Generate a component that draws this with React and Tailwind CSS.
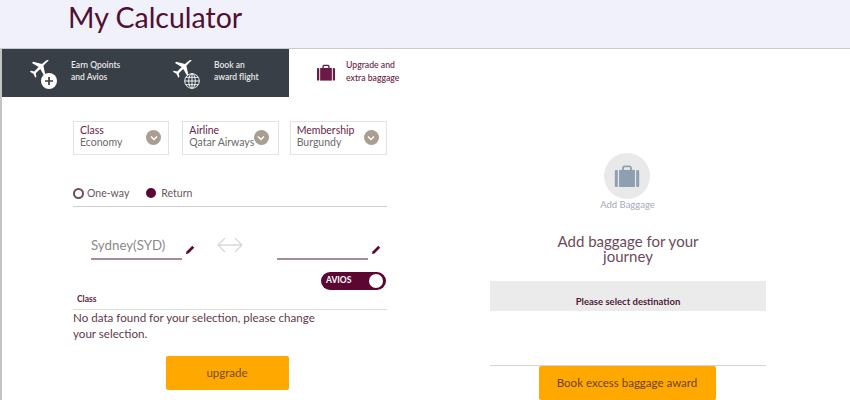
import React from 'react';

const PlaneIcon = ({ className }) => (
    <svg viewBox="0 0 24 24" className={className} fill="currentColor">
        <path d="M23.500 1.800c-.7-.9-2.300-.5-3.300.3l-4.700 3.900L5 3.400 3.600 4.700l8 5-5.300 5.200-4-.9L1 15.200l4.300 2.600 2.400 4.600 1.200-1.200-.8-4.100 5.400-5.100 4.700 8.200 1.400-1.400-2.300-10.600 4.300-4.500c.9-1 2.400-1.900 1.900-2.500z" />
    </svg>
);

const PlusBadge = () => (
    <svg viewBox="0 0 16 16" className="w-4 h-4">
        <circle cx="8" cy="8" r="8" fill="#fff" />
        <path d="M8 4v8M4 8h8" stroke="#383f47" strokeWidth="1.700" />
    </svg>
);

const GlobeBadge = () => (
    <svg viewBox="0 0 16 16" className="w-4 h-4" fill="none" stroke="#fff" strokeWidth="0.900">
        <circle cx="8" cy="8" r="7.300" />
        <ellipse cx="8" cy="8" rx="3.300" ry="7.300" />
        <path d="M8 .7v14.600M.7 8h14.600M1.800 4.300h12.400M1.800 11.700h12.400" />
    </svg>
);

const BagIcon = ({ className }) => (
    <svg viewBox="0 0 20 18" className={className} fill="currentColor">
        <path d="M6 4V2.500C6 1.200 7 .5 8 .5h4c1 0 2 .7 2 2V4h-1.500V2.500c0-.4-.2-.6-.6-.6H8.100c-.4 0-.6.2-.6.6V4z" />
        <rect x="0" y="4" width="2.500" height="14" rx="1" />
        <rect x="3.500" y="4" width="13" height="14" />
        <rect x="17.500" y="4" width="2.500" height="14" rx="1" />
    </svg>
);

const Pencil = ({ className }) => (
    <svg viewBox="0 0 10 10" className={className} fill="#5c0632">
        <path d="M0 10l.6-2.700L7 .9l2.100 2.100-6.400 6.400z" />
    </svg>
);

const Chevron = ({ className }) => (
    <span className={`flex items-center justify-center w-[15px] h-[15px] rounded-full bg-[#a89e92] ${className}`}>
        <svg viewBox="0 0 10 10" className="w-[10px] h-[10px]" fill="none" stroke="#fff" strokeWidth="1.500">
            <path d="M2 3.500l3 3 3-3" />
        </svg>
    </span>
);

const Tab = ({ badge, line1, line2, width }) => (
    <div className={`flex items-center ${width}`}>
        <div className="relative w-[28px] h-[30px] ml-[27px] mt-[2px] text-white">
            <PlaneIcon className="w-[20px] h-[20px] absolute left-0 top-0" />
            <span className="absolute right-0 bottom-0">{badge}</span>
        </div>
        <div className="ml-[14px] mb-[4px] text-[8.500px] leading-[12.500px] text-[#e8e8e8] font-semibold">
            <div>{line1}</div>
            <div>{line2}</div>
        </div>
    </div>
);

const SelectBox = ({ label, value, width, chevron }) => (
    <div className={`relative h-[34px] border-[1.500px] border-[#e3e3e3] pl-[6px] pt-[2px] text-[10.500px] leading-[12px] ${width}`}>
        <div className="text-[#6a2346]">{label}</div>
        <div className="text-[#6b6b6b] whitespace-nowrap">{value}</div>
        <Chevron className={`absolute top-[8px] ${chevron}`} />
    </div>
);

const App = () => {
    return (
        <div className="w-[850px] h-[400px] overflow-hidden bg-white font-['Lato','Open_Sans',sans-serif]">
            <header className="h-[49px] bg-[#f1f1fb] border-b border-[#c9c9cf] pl-[68px]">
                <h1 className="text-[28.500px] leading-[34px] text-[#4f1033]">My Calculator</h1>
            </header>

            <div className="flex h-[351px] border-l-2 border-[#c4c4c4]">
                <div className="w-[488px] shrink-0">
                    <nav className="flex h-[48px]">
                        <div className="flex w-[287px] bg-[#383f47]">
                            <Tab badge={<PlusBadge />} line1="Earn Qpoints" line2="and Avios" width="w-[143px]" />
                            <Tab badge={<GlobeBadge />} line1="Book an" line2="award flight" width="w-[144px]" />
                        </div>
                        <div className="flex items-center pl-[28px] text-[#6a1b45]">
                            <BagIcon className="w-[18px] h-[17px] mb-[2px] text-[#6a1b45]" />
                            <div className="ml-[11px] mb-[3px] text-[8.700px] leading-[12.500px] font-medium">
                                <div>Upgrade and</div>
                                <div>extra baggage</div>
                            </div>
                        </div>
                    </nav>

                    <div className="pl-[71px] w-[385px]">
                        <div className="flex gap-[13px] mt-[24px]">
                            <SelectBox label="Class" value="Economy" width="w-[97px]" chevron="right-[7px]" />
                            <SelectBox label="Airline" value="Qatar Airways" width="w-[97px]" chevron="right-[9px]" />
                            <SelectBox label="Membership" value="Burgundy" width="w-[98px] ml-[-2px]" chevron="right-[7px]" />
                        </div>

                        <div className="flex items-end h-[34px] mt-[18px] border-b border-[#cfcfcf] pb-[7px] text-[10.500px] leading-[12px] text-[#6b5560]">
                            <span className="w-[11px] h-[11px] rounded-full border-2 border-[#6f4a5e] bg-white" />
                            <span className="ml-[3px]">One-way</span>
                            <span className="w-[10px] h-[10px] ml-[17px] mb-[1px] rounded-full bg-[#5c0632]" />
                            <span className="ml-[5px]">Return</span>
                        </div>

                        <div className="flex items-end h-[53px] pl-[18px]">
                            <div className="w-[91px] h-[24px] border-b-2 border-[#a88a9a] text-[13.300px] leading-[18px] text-[#8a8a8a]">Sydney(SYD)</div>
                            <Pencil className="w-[9px] h-[9px] ml-[4px] mb-[6px]" />
                            <svg viewBox="0 0 26 16" className="w-[26px] h-[16px] ml-[22px] mb-[7px]" fill="none" stroke="#d8d8d8" strokeWidth="1.300">
                                <path d="M1 8h24M8 1L1 8l7 7M18 1l7 7-7 7" />
                            </svg>
                            <div className="w-[91px] h-[29px] ml-[34px] border-b-2 border-[#a88a9a]" />
                            <Pencil className="w-[9px] h-[9px] ml-[4px] mb-[6px]" />
                        </div>

                        <div className="flex justify-end mt-[12px] mr-[1px]">
                            <div className="relative w-[65px] h-[18px] rounded-full bg-[#5c0632] pl-[5px] text-[8.500px] leading-[17px] font-bold text-white">
                                AVIOS
                                <span className="absolute right-[3px] top-[2px] w-[14px] h-[14px] rounded-full bg-white" />
                            </div>
                        </div>

                        <div className="h-[19px] mt-[1px] pl-[4px] pt-[1px] border-b border-[#dcdcdc] text-[8.500px] leading-[14px] font-bold text-[#5f2342]">Class</div>
                        <p className="w-[260px] text-[11.600px] leading-[16px] text-[#5f3a4d]">No data found for your selection, please change your selection.</p>

                        <div className="flex justify-center mt-[14px]">
                            <button className="w-[123px] h-[34px] ml-[-6px] rounded-[2px] bg-[#ffa900] text-[11.500px] text-[#7a4a20]">upgrade</button>
                        </div>
                    </div>
                </div>

                <div className="w-[276px] shrink-0 flex flex-col items-center pt-[104px]">
                    <div className="flex items-center justify-center w-[46px] h-[46px] mr-[2px] rounded-full bg-[#e9e9e9]">
                        <BagIcon className="w-[26px] h-[22px] text-[#8f9fb2]" />
                    </div>
                    <div className="mr-[1px] text-[9.500px] leading-[12px] text-[#a3abbb]">Add Baggage</div>
                    <h2 className="w-[160px] mt-[23px] text-center text-[15px] leading-[15px] text-[#6d4a5d]">Add baggage for your journey</h2>
                    <div className="w-full h-[30px] mt-[17px] bg-[#ebebeb] pt-[14px] text-center text-[9.500px] leading-[14px] font-bold text-[#4f1a38]">Please select destination</div>
                    <div className="w-full h-[55px] border-b border-[#d4d4d4]" />
                    <button className="w-[177px] h-[34px] mr-[2px] rounded-[2px] bg-[#ffa900] text-[11.500px] text-[#6e3f1c]">Book excess baggage award</button>
                </div>
            </div>
        </div>
    );
};

export default App;
